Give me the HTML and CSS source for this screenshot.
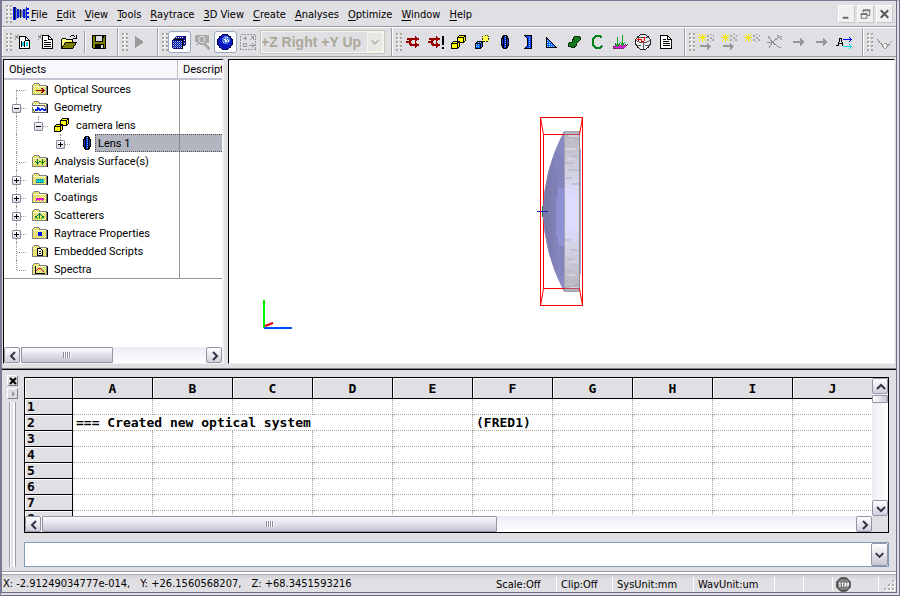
FILE: index.html
```html
<!DOCTYPE html>
<html lang="en">
<head>
<meta charset="utf-8">
<title>FRED</title>
<link rel="stylesheet" href="styles.css">
</head>
<body>
<svg class="defs" aria-hidden="true">
  <defs>
    <pattern id="dither" width="2" height="2" patternUnits="userSpaceOnUse"><path fill="#ffff20" d="M0 0h2v2H0z"/><path fill="#d0d0c0" d="M0 0h1v1H0zM1 1h1v1H1z"/></pattern>
    <pattern id="bluedots" width="2" height="2" patternUnits="userSpaceOnUse"><path fill="#1060ff" d="M0 0h2v2H0z"/><path fill="#80e0ff" d="M0 0h1v1H0z"/></pattern>
    <symbol id="folder" viewBox="0 0 16 16"><path fill="#000" d="M2 14h14V5h-1v8H2z"/><path fill="#808080" d="M0 4h1V3h1V2h5v1h1v1h7v10H0z"/><path fill="url(#dither)" d="M1 4h1V3h5v2h7v8H1z"/><path fill="#fff" d="M1 5h13v1H1z" opacity=".7"/></symbol>
    <symbol id="cubes" viewBox="0 0 16 16"><path fill="#ff0" stroke="#000" d="M6.500 3.500l2-2h6v5l-2 2h-6zM.5 9.500l2-2h6v5l-2 2h-6z"/><path fill="none" stroke="#000" d="M6.500 3.500h6v5M12.500 3.500l2-2M.5 9.500h6v5M6.500 9.500l2-2"/></symbol>
    <symbol id="lens" viewBox="0 0 16 16"><path fill="#1030d0" stroke="#000" d="M6.500 1.500h3l2 4v5l-2 4h-3l-2-4v-5z"/><path stroke="#000" d="M6.500 2v12M9.500 2v12"/><path stroke="#60c0ff" stroke-dasharray="1 1" d="M8 2v12"/></symbol>
    <symbol id="page" viewBox="0 0 16 16"><path fill="#fff" stroke="#000" d="M2.500 1.500h7l4 4v9h-11z"/><path fill="none" stroke="#000" d="M9.500 1.500v4h4M4.500 5.500h3M4.500 7.500h6M4.500 9.500h7M4.500 11.500h7"/></symbol>
    <symbol id="arrow" viewBox="0 0 16 16"><path fill="#969696" d="M3 7h7V4h1v1h1v1h1v1h1v2h-1v1h-1v1h-1v1h-1V9H3z"/></symbol>
    <symbol id="rays" viewBox="0 0 16 16"><path fill="#f0e800" d="M0 3h8v1H0zM4 0h1v8H4zM1 0h1v1h1v1h1v1H3V2H2V1H1zM7 0h1v1H7v1H6v1H5V2h1V1h1zM1 7h1V6h1V5h1V4H3v1H2v1H1zM7 7h1V6H7V5H6V4H5v1h1v1h1z"/><path fill="#a8a8a8" d="M9 1h2v2H9zM12 0h2v1h-2zM12 3h2v2h-2zM15 1h1v2h-1zM9 5h2v2H9zM14 5h2v2h-2zM12 7h1v1h-1z"/></symbol>
    <symbol id="chev-left" viewBox="0 0 16 16"><path fill="none" stroke="#333344" stroke-width="2" d="M10 4L6 8l4 4"/></symbol>
    <symbol id="chev-right" viewBox="0 0 16 16"><path fill="none" stroke="#333344" stroke-width="2" d="M6 4l4 4-4 4"/></symbol>
    <symbol id="chev-up" viewBox="0 0 16 16"><path fill="none" stroke="#333344" stroke-width="2" d="M4 10l4-4 4 4"/></symbol>
    <symbol id="chev-down" viewBox="0 0 16 16"><path fill="none" stroke="#333344" stroke-width="2" d="M4 6l4 4 4-4"/></symbol>
  </defs>
</svg>

<div class="window">
  <header class="menubar">
    <span class="grip"></span>
    <svg class="applogo" viewBox="0 0 16 16"><path fill="#0018e8" d="M0 1h3v13H0zM4 3h2v9H4zM13 1h1v13h-1zM10 3h2v9h-2zM14 2h2v2h-2zM14 6h2v2h-2zM14 10h2v2h-2z"/><path fill="#8088a0" d="M3 2h1v11H3zM6 4h4v7H6zM12 3h1v9h-1z"/><path fill="#101030" d="M7 3h1v9H7zM1 1h1v12H1z"/></svg>
    <nav class="menus">
      <button><u>F</u>ile</button><button><u>E</u>dit</button><button><u>V</u>iew</button><button><u>T</u>ools</button><button><u>R</u>aytrace</button><button><u>3</u>D View</button><button><u>C</u>reate</button><button><u>A</u>nalyses</button><button><u>O</u>ptimize</button><button><u>W</u>indow</button><button><u>H</u>elp</button>
    </nav>
    <div class="controls">
      <button aria-label="Minimize"><svg viewBox="0 0 16 16"><path fill="#666" d="M4 11h6v2H4z"/></svg></button>
      <button aria-label="Restore"><svg viewBox="0 0 16 16"><path fill="none" stroke="#666" d="M5.500 6V3.500h7v6H10M3.500 7.500h6v5h-6zM5 4.500h8M3 8.500h7"/></svg></button>
      <button aria-label="Close"><svg viewBox="0 0 16 16"><path stroke="#555" stroke-width="2" d="M4 4l8 8M12 4l-8 8"/></svg></button>
    </div>
  </header>

  <div class="toolbar">
    <div class="group">
      <span class="grip"></span>
      <button aria-label="New system"><svg viewBox="0 0 16 16"><path fill="#fff" stroke="#000" d="M4.500 2.500h6l4 4v8h-10z"/><path fill="none" stroke="#000" d="M10.500 2.500v4h4"/><path fill="#000" d="M6 7h1v6H6zM9 7h1v6H9z"/><path fill="#20d0e0" d="M7 8h2v4H7zM11 8h2v4h-2z"/><path stroke="#888" stroke-dasharray="1 1" d="M0 1l4 4M4 0L0 6M0 3.500h4"/></svg></button>
      <button aria-label="New document"><svg viewBox="0 0 16 16"><path fill="#fff" stroke="#000" d="M4.500 1.500h6l4 4v9h-10z"/><path fill="none" stroke="#000" d="M10.500 1.500v4h4M6 6.500h3M6 8.500h7M6 10.500h7M6 12.500h7"/><path stroke="#888" stroke-dasharray="1 1" d="M0 1l4 4M4 0L0 6M0 3.500h4"/></svg></button>
      <button aria-label="Open"><svg viewBox="0 0 16 16"><path fill="#ffff80" stroke="#000" d="M.5 14V5.500l1-1h3l1 1h6v3"/><path fill="#808000" stroke="#000" d="M.5 14.500l4-6h11l-4 6z"/><path fill="none" stroke="#000" d="M8.500 3.500l2-2h2l2 2M15 1v3h-3"/></svg></button>
      <span class="sep"></span>
      <button aria-label="Save"><svg viewBox="0 0 16 16"><path fill="#808000" stroke="#000" d="M1.500 1.500h13v13h-12l-1-1z"/><path fill="#e0dfe3" stroke="#000" d="M4.500 1.500h7v6h-7z"/><path fill="#000" d="M4 10h9v5H4zM12 2h1v2h-1z"/><path fill="#e0dfe3" d="M10 11h2v3h-2z"/></svg></button>
    </div>
    <div class="group">
      <span class="grip"></span>
      <button aria-label="Run" disabled><svg viewBox="0 0 16 16"><path fill="#999" d="M4 2l9 6-9 6z"/></svg></button>
    </div>
    <div class="group">
      <span class="grip"></span>
      <button class="pressed" aria-label="Shaded view"><svg viewBox="0 0 16 16"><path fill="#101080" d="M1 6h1V5h1V4h1V3h1V2h10v9h-1v1h-1v1h-1v1h-1v1H2v-1H1z"/><path stroke="#a0c8ff" stroke-dasharray="1 1" d="M2 7.500h9M2 9.500h9M2 11.500h9M2 13.500h9"/><path stroke="#4070ff" stroke-dasharray="1 1" d="M3 8.500h8M3 10.500h8M3 12.500h8"/><path stroke="#fff" stroke-dasharray="1 1" d="M5 3.500h8M13 6.500h3M13 9.500h3M12 12.500h3"/><path stroke="#000" fill="none" d="M1.500 5.500h10v9"/></svg></button>
      <button aria-label="Zoom" disabled><svg viewBox="0 0 16 16"><path fill="#aaa" d="M1 1h14v8h-3l4 5-2 2-5-5H6v-1l-4 1 2-3H1z"/><circle cx="8" cy="5.500" r="3" fill="none" stroke="#ddd"/></svg></button>
      <button class="pressed" aria-label="Sphere view"><svg viewBox="0 0 16 16"><circle cx="8" cy="8" r="7.500" fill="#0818c0" stroke="#000040"/><circle cx="9" cy="6" r="4" fill="#4878e0"/><path fill="#fff" d="M8 3h1v1H8zM10 3h1v1h-1zM7 5h2v1H7zM10 5h1v1h-1zM8 6h2v2H8zM11 6h1v2h-1zM6 8h1v1H6z"/></svg></button>
      <button aria-label="Fit" disabled><svg viewBox="0 0 16 16"><path fill="none" stroke="#999" stroke-dasharray="2 1" d="M.5.5h15v15H.5z"/><path fill="none" stroke="#999" d="M5 2v4M3 4.500h4M10 6l3-3M10.500 2.500h3v3M3.500 9.500h3v3h-3zM9 11.500h5M12 9l2 2.500-2 2.500"/></svg></button>
      <label class="viewpick"><select aria-label="View orientation" disabled><option>+Z Right +Y Up</option></select><span class="drop"><svg viewBox="0 0 16 16"><path fill="none" stroke="#bbb9ae" stroke-width="2" d="M4 6l4 4 4-4"/></svg></span></label>
    </div>
    <div class="group">
      <span class="grip"></span>
      <button aria-label="Trace"><svg viewBox="0 0 16 16"><path fill="#900" d="M2 4h8V2h1v1h1v1h2v2h-2v1h-1v1h-1V6H7v1H6v2h1v1h3V8h1v1h1v1h2v2h-2v1h-1v1h-1v-2H5v-1H4V9H1V7h3V6H2z"/></svg></button>
      <button aria-label="Trace all"><svg viewBox="0 0 16 16"><path fill="#900" d="M1 4h7V2h1v1h1v1h2v2h-2v1H9v1H8V6H6v1H5v2h1v1h2V8h1v1h1v1h2v2h-2v1H9v1H8v-2H4v-1H3V9H0V7h3V6H1z"/><path fill="#000" d="M14 2h2v9h-2zM14 13h2v2h-2z"/></svg></button>
      <button aria-label="Assembly"><svg><use href="#cubes"/></svg></button>
      <button aria-label="Custom element"><svg viewBox="0 0 16 16"><path fill="url(#bluedots)" stroke="#000" d="M1.500 9.500l2-2h5v5l-2 2h-5z"/><path fill="none" stroke="#000" d="M1.500 9.500h5v5M6.500 9.500l2-2"/><circle cx="11.500" cy="4.500" r="3.500" fill="#ffff50" stroke="#333" stroke-dasharray="2 1"/></svg></button>
      <button aria-label="Lens"><svg><use href="#lens"/></svg></button>
      <button aria-label="Mirror"><svg viewBox="0 0 16 16"><path fill="#1040ff" stroke="#000" d="M4.500 1.500h7v13h-7l3-3v-7z"/><path stroke="#70d0ff" stroke-dasharray="1 1" d="M9.500 3v11"/></svg></button>
      <button aria-label="Prism"><svg viewBox="0 0 16 16"><path fill="url(#bluedots)" stroke="#000" d="M3.500 3.500v10h10z"/></svg></button>
      <button aria-label="Surface"><svg viewBox="0 0 16 16"><path fill="#187820" stroke="#003000" d="M8 3l3-1 3 1v3l-3 3-1 3-3 2-2-1-3-1 1-3 3-1z"/></svg></button>
      <button aria-label="Curve"><svg viewBox="0 0 16 16"><path fill="none" stroke="#008018" stroke-width="2" d="M13 4l-2-2H7L4 5v6l3 3h4l2-2"/></svg></button>
      <button aria-label="Analysis surface"><svg viewBox="0 0 16 16"><path fill="#d020d0" stroke="#333" stroke-dasharray="1 1" d="M.5 14.500l3-4h12l-4 4z"/><path fill="none" stroke="#10a020" d="M5.500 3v9M3 9l2.500 3L8 9M10.500 1v10M8 8l2.500 3L13 8"/></svg></button>
      <button aria-label="Globe"><svg viewBox="0 0 16 16"><circle cx="8" cy="8" r="7.500" fill="#eee" stroke="#222"/><path fill="none" stroke="#555" d="M1 6.500c4 3 10 3 14 0M1 10.500c4 2 10 2 14 0M3 3.500h10M8 9v6"/><path fill="#f00" d="M2 5h4v1H2zM3 4h1v3H3zM6 5h1v3H6zM8 3h2v1H8zM9 4h1v3H9zM7 7h2v1H7z"/></svg></button>
      <button aria-label="Report"><svg><use href="#page"/></svg></button>
    </div>
    <div class="group">
      <span class="grip"></span>
      <button aria-label="Add rays"><svg viewBox="0 0 16 16"><use href="#rays"/><path fill="#969696" d="M2 11h7V9h1v1h1v1h1v1h1v1h-1v1h-1v1h-1v1H9v-3H2z"/></svg></button>
      <button aria-label="Step rays"><svg viewBox="0 0 16 16"><use href="#rays"/><path fill="#969696" d="M2 11h7V9h1v1h1v1h1v1h1v1h-1v1h-1v1h-1v1H9v-3H2z"/></svg></button>
      <button aria-label="Create rays"><svg><use href="#rays"/></svg></button>
      <button aria-label="Delete rays" disabled><svg viewBox="0 0 16 16"><path stroke="#909090" fill="none" d="M1 2c3 5 7 10 13 12M2 14c3-6 7-10 13-12M0 8h6"/><path fill="#aaa" d="M10 1h2v2h-2zM13 4h2v2h-2zM8 4h2v1H8z"/></svg></button>
      <button aria-label="Advance" disabled><svg><use href="#arrow"/></svg></button>
      <button aria-label="Finish" disabled><svg><use href="#arrow"/></svg></button>
      <button aria-label="Animate"><svg viewBox="0 0 16 16"><path fill="none" stroke="#000" d="M0 11.500h2l2-7h1l2 7M2 9.500h4"/><path fill="none" stroke="#00f" d="M7 5.500h8M13 3l2.500 2.500L13 8"/><path fill="none" stroke="#00e0f0" d="M7 12.500h8M13 10l2.500 2.500L13 15"/></svg></button>
    </div>
    <div class="group">
      <span class="grip"></span>
      <button aria-label="More" disabled><svg viewBox="0 0 16 16"><path fill="#fff" d="M3 9h12l-6 6z"/><path fill="none" stroke="#999" d="M1 5l8 10 7-8M4 9l3 2 2-2 3 2 3-3"/></svg></button>
    </div>
  </div>

  <main class="workspace">
    <section class="tree">
      <div class="treehead"><span class="name">Objects</span><span class="desc">Descript</span></div>
      <div class="treebody">
        <div class="rows">
          <div class="row"><div class="cell"><span class="slot first"></span><svg><use href="#folder"/><path stroke="#900" fill="none" d="M4 9.500h8M9.500 7l2.500 2.500L9.500 12"/></svg><span class="text">Optical Sources</span></div></div>
          <div class="row"><div class="cell"><span class="slot"><button class="toggle" aria-label="Collapse Geometry"></button></span><svg><use href="#folder"/><path fill="#fff" stroke="#666" d="M-.5 6.500h13l2 7h-12z"/><path fill="none" stroke="#0020e0" stroke-width="2" d="M3 11h2l1-2 2 2 2-1 2 1h2"/></svg><span class="text">Geometry</span></div></div>
          <div class="row"><div class="cell"><span class="guide"></span><span class="slot last"><button class="toggle" aria-label="Collapse camera lens"></button></span><svg><use href="#cubes"/></svg><span class="text">camera lens</span></div></div>
          <div class="row selected"><div class="cell"><span class="guide"></span><span class="guide empty"></span><span class="slot last"><button class="toggle plus" aria-label="Expand Lens 1"></button></span><svg class="leaf"><use href="#lens"/></svg><span class="text">Lens 1</span></div></div>
          <div class="row"><div class="cell"><span class="slot"></span><svg><use href="#folder"/><path fill="#008020" d="M5 6h1v6H5zM4 9h3v1H4zM3 8h1v1H3zM7 8h1v1H7zM10 6h1v6h-1zM9 9h3v1H9zM8 8h1v1H8zM12 8h1v1h-1z"/></svg><span class="text">Analysis Surface(s)</span></div></div>
          <div class="row"><div class="cell"><span class="slot"><button class="toggle plus" aria-label="Expand Materials"></button></span><svg><use href="#folder"/><path fill="#10c8d8" d="M4 8h8v4H4z"/><path stroke="#066" stroke-dasharray="1 1" d="M4 8.500h8M4 11.500h8"/></svg><span class="text">Materials</span></div></div>
          <div class="row"><div class="cell"><span class="slot"><button class="toggle plus" aria-label="Expand Coatings"></button></span><svg><use href="#folder"/><path fill="#f010e0" d="M4 9h8v2h-1v1h-1v-1H8v1H7v-1H5v1H4z"/></svg><span class="text">Coatings</span></div></div>
          <div class="row"><div class="cell"><span class="slot"><button class="toggle plus" aria-label="Expand Scatterers"></button></span><svg><use href="#folder"/><path fill="#008020" d="M7 6h1v6H7zM6 7h3v1H6zM5 8h1v1H5zM9 8h1v1H9zM3 9h2v1H3zM3 10h1v1H3zM4 10h1v1h1v1H5v-1H4zM10 9h2v1h-2zM11 10h1v1h-1zM10 10v1H9v1h1v-1h1v-1z"/></svg><span class="text">Scatterers</span></div></div>
          <div class="row"><div class="cell"><span class="slot"><button class="toggle plus" aria-label="Expand Raytrace Properties"></button></span><svg><use href="#folder"/><path fill="#0010f0" d="M6 7h4v4H6z"/></svg><span class="text">Raytrace Properties</span></div></div>
          <div class="row"><div class="cell"><span class="slot"></span><svg><use href="#folder"/><path fill="#fff" stroke="#000" d="M5.500 5.500h3l2 2v5h-5z"/><path stroke="#000" d="M7 8.500h2M7 10.500h2"/></svg><span class="text">Embedded Scripts</span></div></div>
          <div class="row"><div class="cell"><span class="slot last"></span><svg><use href="#folder"/><path fill="none" stroke="#000" d="M3.500 5v7.500H13"/><path fill="none" stroke="#e00000" d="M4 10l3-3 2 1 3 3"/></svg><span class="text">Spectra</span></div></div>
        </div>
      </div>
      <div class="hscroll">
        <button aria-label="Scroll left"><svg><use href="#chev-left"/></svg></button>
        <div class="track"><div class="thumb half"></div></div>
        <button aria-label="Scroll right"><svg><use href="#chev-right"/></svg></button>
      </div>
    </section>

    <section class="view">
      <svg class="scene" role="img" aria-label="Lens 1 in 3D view">
        <defs>
          <linearGradient id="rim" x1="0" y1="0" x2="0" y2="1"><stop offset="0" stop-color="#b4b4bc"/><stop offset=".2" stop-color="#ccccdc"/><stop offset=".42" stop-color="#dedcff"/><stop offset=".6" stop-color="#dedcff"/><stop offset=".8" stop-color="#ccccdc"/><stop offset="1" stop-color="#b0b0b8"/></linearGradient>
          <linearGradient id="dome" x1="0" y1="0" x2="1" y2="0"><stop offset="0" stop-color="#7474a4"/><stop offset="1" stop-color="#8c8cc8"/></linearGradient>
        </defs>
        <path fill="none" stroke="#f00" d="M314.500 74.500v154"/>
        <path fill="url(#dome)" stroke="#8888c0" d="M335 72Q294 151 335 231z"/>
        <path fill="#8484bc" d="M326 96h9v32h-9zM331 176h4v40h-4z"/>
        <path fill="#9090d4" d="M329 128h6v58h-6v-10h-2v-38h2z"/>
        <path fill="#7878b0" d="M326 112h1v22h-1z"/>
        <path fill="url(#rim)" d="M335 71h16v161h-16z"/>
        <path fill="none" stroke="#a4a4b0" d="M335 71.500h15M335.500 71v161M335 231.500h15"/>
        <path stroke="#c0c0cc" stroke-width="2" d="M338 80h8M341 86h9M337 92h5M342 96h8M336 103h9M340 110h10M337 118h6M343 124h7M336 180h5M341 190h8M337 199h7M343 205h7M338 211h5M341 218h9M337 224h8"/>
        <path stroke="#d4d4e0" stroke-width="2" d="M340 76h9M337 89h10M339 99h7M342 114h7M338 186h9M337 195h4M342 202h6M338 215h8M341 228h8"/>
        <path stroke="#988898" d="M350.500 72v159"/><path stroke="#a8a8c8" d="M351.500 89v125"/>
        <path fill="none" stroke="#f00" d="M311.500 57.500h42v188h-42zM314.500 74.500H335M314.500 228.500H335M311.500 57.500l3 17M353.500 57.500l-3 17M311.500 245.500l3-17M353.500 245.500l-3-17"/>
        <path stroke="#c04858" d="M335 74.500h15M335 228.500h15"/>
        <path stroke="#107040" d="M313.500 146v11"/><path stroke="#2020a0" d="M308 151.500h11"/>
        <path fill="#00f000" d="M34 240h2v28h-2z"/><path fill="#0050ff" d="M35 267h28v2H35z"/><path fill="none" stroke="#e00000" stroke-width="2" d="M36 266l8-3"/>
      </svg>
    </section>
  </main>

  <section class="dock">
    <div class="dockgrip">
      <button aria-label="Close pane"><svg viewBox="0 0 8 8"><path stroke="#000" stroke-width="2" d="M1 1l6 6M7 1L1 7"/></svg></button>
      <button aria-label="Expand pane"><svg viewBox="0 0 8 8"><path fill="#999" d="M3 1l3 3-3 3z"/></svg></button>
      <span class="bars"></span>
    </div>
    <div class="dockmain">
      <div class="sheet">
        <div class="cells">
          <table>
            <colgroup><col class="rowno"><col span="10"></colgroup>
            <thead><tr><th></th><th>A</th><th>B</th><th>C</th><th>D</th><th>E</th><th>F</th><th>G</th><th>H</th><th>I</th><th>J</th></tr></thead>
            <tbody>
              <tr><th>1</th><td></td><td></td><td></td><td></td><td></td><td></td><td></td><td></td><td></td><td></td></tr>
              <tr><th>2</th><td colspan="4">=== Created new optical system</td><td></td><td>(FRED1)</td><td></td><td></td><td></td><td></td></tr>
              <tr><th>3</th><td></td><td></td><td></td><td></td><td></td><td></td><td></td><td></td><td></td><td></td></tr>
              <tr><th>4</th><td></td><td></td><td></td><td></td><td></td><td></td><td></td><td></td><td></td><td></td></tr>
              <tr><th>5</th><td></td><td></td><td></td><td></td><td></td><td></td><td></td><td></td><td></td><td></td></tr>
              <tr><th>6</th><td></td><td></td><td></td><td></td><td></td><td></td><td></td><td></td><td></td><td></td></tr>
              <tr><th>7</th><td></td><td></td><td></td><td></td><td></td><td></td><td></td><td></td><td></td><td></td></tr>
              <tr><th>8</th><td></td><td></td><td></td><td></td><td></td><td></td><td></td><td></td><td></td><td></td></tr>
            </tbody>
          </table>
        </div>
        <div class="vscroll">
          <button aria-label="Scroll up"><svg><use href="#chev-up"/></svg></button>
          <div class="track"><div class="thumb short"></div></div>
          <button aria-label="Scroll down"><svg><use href="#chev-down"/></svg></button>
        </div>
        <div class="hscroll">
          <button aria-label="Scroll left"><svg><use href="#chev-left"/></svg></button>
          <div class="track"><div class="thumb wide"></div></div>
          <button aria-label="Scroll right"><svg><use href="#chev-right"/></svg></button>
        </div>
      </div>
      <div class="command"><input type="text" aria-label="Command"><button aria-label="History"><svg><use href="#chev-down"/></svg></button></div>
    </div>
  </section>

  <footer class="status">
    <span class="coords"><span>X: -2.91249034777e-014,</span><span>Y: +26.1560568207,</span><span>Z: +68.3451593216</span></span>
    <span class="pane scale">Scale:Off</span>
    <span class="pane clip">Clip:Off</span>
    <span class="pane unit">SysUnit:mm</span>
    <span class="pane unit">WavUnit:um</span>
    <span class="pane blank"></span>
    <span class="pane blank"></span>
    <span class="pane stop"><svg viewBox="0 0 16 16"><path fill="#808080" stroke="#000" d="M5 1h6l4 4v6l-4 4H5l-4-4V5z"/><path fill="#fff" d="M3 6h2v1H4v1h1v2H3V9h1V8H3zM6 6h2v1H7.500v3h-1V7H6zM9 6h2v4H9zM12 6h2v3h-1v1h-1z"/></svg></span>
    <span class="pane corner"><svg viewBox="0 0 12 12"><path fill="#fff" d="M9 1h3v3H9zM5 5h3v3H5zM9 5h3v3H9zM1 9h3v3H1zM5 9h3v3H5zM9 9h3v3H9z"/><path fill="#b0aea0" d="M9 1h2v2H9zM5 5h2v2H5zM9 5h2v2H9zM1 9h2v2H1zM5 9h2v2H5zM9 9h2v2H9z"/></svg></span>
  </footer>
</div>
</body>
</html>
```
FILE: styles.css
```css
* { box-sizing: border-box; }

:root {
  --face: #e0dfe3;
  --shade: #9d9da1;
  --ui: "DejaVu Sans Condensed", "Noto Sans", "Liberation Sans", sans-serif;
  --tree: Roboto, "Liberation Sans", sans-serif;
  --mono: "DejaVu Sans Mono", "Liberation Mono", monospace;
}

body {
  margin: 0;
  background: var(--face);
  color: #000;
  font: 11px/16px var(--ui);
}

button {
  margin: 0;
  padding: 0;
  border: 0;
  background: none;
  color: inherit;
  font: inherit;
}

svg { display: block; flex: none; width: 16px; height: 16px; }
.defs { position: absolute; width: 0; height: 0; }

.window {
  display: flex;
  flex-direction: column;
  height: 100vh;
  border: 1px solid #7a7893;
  border-left-width: 2px;
  border-right: 4px double #6c6a88;
  border-bottom: 4px double #6c6a88;
  background: var(--face);
  overflow: hidden;
}

.grip {
  flex: none;
  width: 6px;
  height: 18px;
  background: radial-gradient(circle at 1px 1px, #a8a69c 1px, transparent 1px) 0 0 / 4px 4px,
    radial-gradient(circle at 2px 2px, #fff 1px, transparent 1px) 0 0 / 4px 4px;
}

/* Menu bar */
.menubar {
  display: flex;
  flex: none;
  align-items: center;
  height: 26px;
  padding: 0 3px 0 4px;
  border-bottom: 1px solid var(--shade);
}
.applogo { margin-left: 1px; }
.menus { display: flex; flex: 1; gap: 1px; margin-left: -2px; }
.menus button { padding: 2px 4px 0; }
.menus u { text-underline-offset: 2px; }
.controls { display: flex; gap: 2px; }
.controls button {
  width: 17px;
  height: 18px;
  border: 1px solid #fff;
  border-right-color: #c8c8cc;
  border-bottom-color: #c8c8cc;
  background: #f0f0f0;
}
.controls svg { width: 15px; height: 16px; }

/* Toolbars */
.toolbar {
  display: flex;
  flex: none;
  height: 30px;
  border-top: 1px solid #fff;
  border-bottom: 1px solid var(--shade);
  overflow: hidden;
}
.group {
  display: flex;
  flex: none;
  align-items: center;
  padding: 0 6px 0 3px;
  border-left: 1px solid #fff;
  border-right: 1px solid var(--shade);
}
.group button {
  display: grid;
  flex: none;
  place-items: center;
  width: 23px;
  height: 22px;
  padding-right: 1px;
}
.group svg, .cell svg { shape-rendering: crispEdges; }
.group .pressed {
  border: 1px solid #98a8c0;
  border-radius: 3px;
  background: #fff;
}
.sep {
  width: 2px;
  height: 22px;
  margin: 0 2px 0 3px;
  border-left: 1px solid var(--shade);
  border-right: 1px solid #fff;
}
.viewpick { position: relative; width: 125px; height: 24px; }
.viewpick select {
  width: 100%;
  height: 100%;
  padding: 0;
  border: 1px solid #c9c7ba;
  border-radius: 0;
  outline: 1px solid #f4f3ee;
  outline-offset: -2px;
  appearance: none;
  background: var(--face);
  color: #aca899;
  font: bold 14px/20px "Liberation Sans", sans-serif;
  opacity: 1;
}
.drop {
  position: absolute;
  top: 2px;
  right: 2px;
  display: grid;
  place-items: center;
  width: 16px;
  height: 20px;
  border: 1px solid #f5f4ea;
  background: #e8e7e2;
}
.drop svg { width: 14px; height: 14px; shape-rendering: auto; }

/* Workspace */
.workspace {
  display: grid;
  flex: 1;
  grid-template-columns: 221px 1fr;
  gap: 4px;
  min-height: 0;
  padding: 2px 1px 4px;
}
.tree, .view {
  min-width: 0;
  min-height: 0;
  border: 1px solid #000;
  border-right-color: #f1f0f2;
  border-bottom-color: #f1f0f2;
  background: #fff;
}
.tree {
  display: flex;
  flex-direction: column;
  border-right-width: 2px;
  font: 11px/18px var(--tree);
}
.treehead {
  display: flex;
  flex: none;
  height: 20px;
  border-bottom: 2px solid #c4c3d4;
  background: #f8f8fc;
  line-height: 20px;
  overflow: hidden;
}
.treehead span { padding-left: 5px; }
.treehead .name { flex: none; width: 174px; border-right: 1px solid #bcbcc8; }
.treebody { flex: 1; min-height: 0; overflow: hidden; }
.rows {
  border-bottom: 1px solid #999;
  background: linear-gradient(#999, #999) 175px 0 / 1px 100% no-repeat;
}
.row { height: 18px; }
.cell { display: flex; align-items: center; height: 18px; }
.text {
  height: 18px;
  margin-left: 3px;
  padding-left: 3px;
  line-height: 20px;
  white-space: nowrap;
}
.selected .text {
  flex: 1;
  border: 1px dotted #555;
  border-right: 0;
  padding-left: 2px;
  background: linear-gradient(#888, #888) 83px 0 / 1px 100% no-repeat, #b2b4bf;
  line-height: 18px;
}
.selected .leaf { margin-left: 3px; margin-right: -3px; }
.guide { position: relative; flex: none; width: 22px; height: 18px; }
.slot { position: relative; flex: none; width: 28px; height: 18px; }
.guide::before, .slot::before {
  content: "";
  position: absolute;
  top: 0;
  bottom: 0;
  left: 12px;
  border-left: 1px dotted #999;
}
.guide.empty::before { display: none; }
.slot.first::before { top: 10px; }
.slot.last::before { bottom: 8px; }
.slot::after {
  content: "";
  position: absolute;
  top: 10px;
  left: 13px;
  width: 9px;
  border-top: 1px dotted #999;
}
.toggle {
  position: absolute;
  z-index: 1;
  top: 6px;
  left: 8px;
  width: 9px;
  height: 9px;
  border: 1px solid #8888a0;
  border-radius: 1px;
  background: linear-gradient(#000, #000) 1px 3px / 5px 1px no-repeat, linear-gradient(#fff, #d8d8e2);
}
.toggle.plus {
  background: linear-gradient(#000, #000) 1px 3px / 5px 1px no-repeat,
    linear-gradient(#000, #000) 3px 1px / 1px 5px no-repeat, linear-gradient(#fff, #d8d8e2);
}
.scene { width: 100%; height: 100%; }

/* Scroll bars */
.hscroll { display: flex; flex: none; height: 16px; background: #f4f4fa; }
.vscroll { display: flex; flex-direction: column; width: 16px; background: #f4f4fa; }
.hscroll button, .vscroll button {
  display: grid;
  flex: none;
  place-items: center;
  width: 16px;
  height: 16px;
  border: 1px solid #9494a4;
  border-radius: 2px;
  background: linear-gradient(#fff, #d0d0dc);
  overflow: hidden;
}
.track { flex: 1; min-width: 0; min-height: 0; padding: 0 1px; background: linear-gradient(#ebebf3, #fff); }
.vscroll .track { padding: 1px 0; background: linear-gradient(to right, #ebebf3, #fff); }
.thumb { border: 1px solid #9494a4; border-radius: 1px; }
.hscroll .thumb {
  height: 100%;
  background: repeating-linear-gradient(to right, #8c8c9c 0 1px, #fff 1px 2px) center / 8px 6px no-repeat,
    linear-gradient(#fafafd, #c6c6d4);
}
.half { width: 50%; }
.wide { width: 56%; }
.short { height: 8px; background: linear-gradient(to right, #fff, #c6c6d4); }

/* Output dock */
.dock {
  display: flex;
  flex: none;
  padding: 5px 7px 4px 5px;
  border-top: 1px solid #808084;
  box-shadow: inset 0 1px #000;
}
.dockgrip { display: flex; flex: none; flex-direction: column; gap: 2px; width: 11px; margin: 1px 6px 0 0; }
.dockgrip button {
  display: grid;
  place-items: center;
  width: 11px;
  height: 11px;
  border: 1px solid #fff;
  border-right-color: #808080;
  border-bottom-color: #808080;
}
.dockgrip svg { width: 8px; height: 8px; }
.bars {
  flex: 1;
  width: 7px;
  margin: 1px 0 0 2px;
  border: solid var(--shade);
  border-width: 0 1px;
  background: linear-gradient(to right, #fff 1px, var(--face) 1px 3px, #fff 3px);
}
.dockmain { display: flex; flex: 1; flex-direction: column; gap: 9px; min-width: 0; padding-top: 3px; }
.sheet {
  display: grid;
  grid-template: 138px 16px / minmax(0, 1fr) 16px;
  border: 1px solid #000;
}
.cells { background: #fff; overflow: hidden; }
.cells table {
  width: 848px;
  border-spacing: 0;
  table-layout: fixed;
  font: bold 13px/15px var(--mono);
}
.cells col { width: 80px; }
.cells .rowno { width: 48px; }
.cells th {
  height: 16px;
  padding: 0 2px;
  border: solid #000;
  border-width: 0 1px 1px 0;
  background: var(--face);
  box-shadow: inset 1px 1px #fff;
  font-weight: bold;
}
.cells thead th { height: 21px; }
.cells tbody th { text-align: left; }
.cells td {
  height: 16px;
  padding: 0 3px;
  border: dotted #aca899;
  border-width: 0 1px 1px 0;
  white-space: nowrap;
}
.command { display: flex; height: 25px; border: 1px solid #7f9db9; background: #fff; }
.command input {
  flex: 1;
  min-width: 0;
  padding: 0 3px;
  border: 0;
  background: none;
  font: 12px/16px var(--ui);
}
.command button {
  display: grid;
  place-items: center;
  width: 17px;
  border: 1px solid #9494a4;
  border-radius: 2px;
  background: linear-gradient(#fff, #c8c8d6);
}
.command svg { width: 15px; }

/* Status bar */
.status {
  display: flex;
  flex: none;
  align-items: center;
  height: 21px;
  padding-top: 3px;
  border-top: 1px solid var(--shade);
  background: linear-gradient(#fff 2px, #aaaab0 2px 3px, #cfced4 3px, var(--face) 7px);
}
.coords { display: flex; flex: 1; gap: 10px; padding-left: 1px; white-space: nowrap; }
.pane { flex: none; height: 14px; padding-left: 4px; border-left: 1px solid #fff; line-height: 15px; }
.scale { width: 64px; border: 0; }
.clip { width: 56px; }
.unit { width: 81px; }
.blank { width: 29px; }
.stop { width: 46px; padding-left: 3px; }
.corner { width: 18px; }
.stop svg { width: 15px; height: 15px; }
.corner svg { width: 12px; height: 12px; margin-top: 2px; }
```
